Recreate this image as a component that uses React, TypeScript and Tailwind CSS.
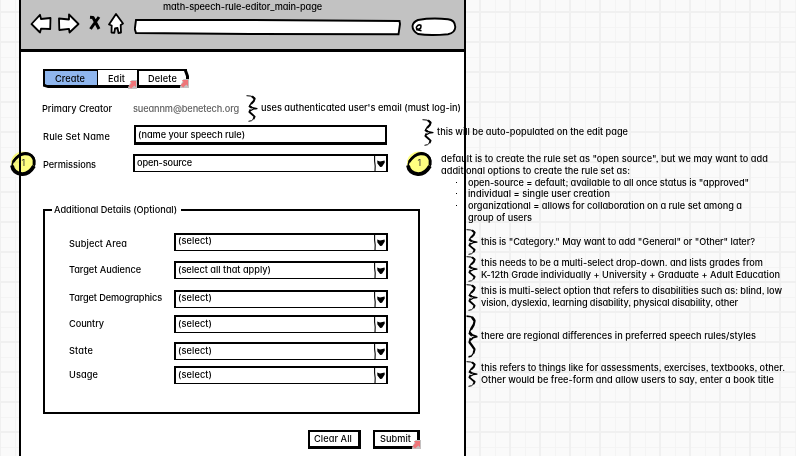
import { useLayoutEffect, useRef } from "react";

// A line of lettering whose tracking is adjusted to fill the given width.
function Line({ w, children, className = "" }: { w: number; children: string; className?: string }) {
  const ref = useRef<HTMLSpanElement>(null);
  useLayoutEffect(() => {
    const fit = () => {
      const el = ref.current;
      if (!el) return;
      el.style.letterSpacing = "0px";
      const natural = el.getBoundingClientRect().width;
      el.style.letterSpacing = `${(w - natural) / children.length}px`;
    };
    fit();
    document.fonts?.ready.then(fit);
  }, [w, children]);
  return (
    <span ref={ref} className={`block w-fit shrink-0 whitespace-pre text-[9.2px] leading-[12px] font-medium ${className}`}>
      {children}
    </span>
  );
}

function Brace({ h = 27 }: { h?: number }) {
  return (
    <svg width="12" height={h} viewBox="0 0 12 27" preserveAspectRatio="none" className="block shrink-0" fill="none" stroke="#000" strokeLinejoin="round">
      <path d="M0.5 0.7 L5 1.1 L8.6 3" strokeWidth="1" />
      <path d="M6 1.4 L8.6 3.6 L7.8 6 L5 9" strokeWidth="2.1" />
      <path d="M5 8.5 L3.6 10.6 L5.5 12.3 L11 13.6 L7 14.2 L5 15.6" strokeWidth="1.2" />
      <path d="M3 10.8 L6 12.8" strokeWidth="2.2" />
      <path d="M4.6 14.5 L3.4 17 L6 19.3 L8.6 21.6 L7.5 24" strokeWidth="1.9" />
      <path d="M8 23.5 L5.5 25.7 L2.5 26.3" strokeWidth="1" />
    </svg>
  );
}

function LinkMark() {
  return (
    <svg width="9" height="9" viewBox="0 0 9 9" className="block">
      <path d="M3.5 0H9V9H0V7.5Z" fill="#c4c0c0" />
      <path d="M1.8 1H8V7.2L6.3 5.6L3.2 8.6L.6 6.2L3.6 3Z" fill="#ee7478" />
    </svg>
  );
}

function Marker() {
  return (
    <svg width="28" height="28" viewBox="0 0 28 28" className="block">
      <ellipse cx="14" cy="13" rx="12" ry="11.5" fill="#ffff80" />
      <path d="M3 17 Q3 10 10 5 Q15 1.5 20 3.5 Q27 7 25.5 15 Q23 22 15 24.5 Q5 25 3 17" fill="none" stroke="#000" strokeWidth="1.6" />
      <path d="M3 15.5 Q4 23 13 24.2 Q20 24.5 25 16" fill="none" stroke="#000" strokeWidth="3.8" />
      <path d="M4 12 Q9 5 15 4 Q23 3 25 10 L25 15" fill="none" stroke="#000" strokeWidth="2.7" />
      <text x="12.5" y="16" fontSize="9" fontFamily="Inter" fill="#333">1</text>
    </svg>
  );
}

function Select({ w, text, tw, drop = "mt-[1px]" }: { w: string; text: string; tw: number; drop?: string }) {
  return (
    <div className={`${w} flex h-[18px] justify-between border-2 border-b-[1px] border-black bg-white`}>
      <Line w={tw} className={`ml-[2px] ${drop}`}>{text}</Line>
      <svg width="12" height="15" viewBox="0 0 12 15" className="block shrink-0">
        <path d="M.6 0L.6 5L1.2 10L1 15" stroke="#000" strokeWidth="1.1" fill="none" />
        <path d="M3.2 4.6L6 5.4L10.6 4.4L10.8 6.6L8 10.8L6.2 11L3.4 7.5Z" fill="#000" />
      </svg>
    </div>
  );
}

const DETAILS = [
  { label: "Subject Area", lw: 58, text: "(select)", tw: 34, gap: "mt-0", shift: "pt-[5px]", drop: "mt-0" },
  { label: "Target Audience", lw: 72, text: "(select all that apply)", tw: 93, gap: "mt-[10px]", shift: "pt-[3px]", drop: "mt-[1px]" },
  { label: "Target Demographics", lw: 93, text: "(select)", tw: 34, gap: "mt-[11px]", shift: "pt-[2px]", drop: "mt-0" },
  { label: "Country", lw: 35, text: "(select)", tw: 34, gap: "mt-[7px]", shift: "pt-[3px]", drop: "mt-[1px]" },
  { label: "State", lw: 24, text: "(select)", tw: 34, gap: "mt-[9px]", shift: "pt-[3px]", drop: "mt-[1px]" },
  { label: "Usage", lw: 29, text: "(select)", tw: 34, gap: "mt-[6px]", shift: "pt-[3px]", drop: "mt-[1px]" },
];

function Header() {
  return (
    <header className="h-[52px] border-b-[3px] border-black bg-[#c2c2c2]">
      <div className="flex h-[13px] pt-[1px] pl-[142px]">
        <Line w={159}>math-speech-rule-editor_main-page</Line>
      </div>
      <div className="flex pl-[9px]">
        <svg width="104" height="23" viewBox="30 13 104 23" className="block shrink-0" fill="#fff" stroke="#000" strokeWidth="1.8" strokeLinejoin="round">
          <path d="M31.5 24L40 14.8L41 19L50.5 18L50.2 29L41 28.7L40 32.5Z" />
          <path d="M59 18.5L69 19.5L69 14.5L78.5 24L69.5 32.5L69 28.8L59.3 30Z" />
          <path d="M90 17.3L93 17.5L99 29M99 17L94 24L90.5 29" fill="none" strokeWidth="3" />
          <path d="M116 14L123 23.5L120.7 25L121 32.5L118.5 33L117.5 28L115 28.5L114.3 32.8L111.5 32.5L111.7 25.5L109 24.5Z" />
        </svg>
        <svg width="324" height="23" viewBox="134 13 324 23" className="block shrink-0" fill="#fff" stroke="#000" strokeWidth="1.9">
          <path d="M136 20L250 20L399.5 21L400 24L398.5 34.3L250 34L136 33L134.8 29Z" />
          <path d="M418 20Q432 17.5 448 19.3Q455 20 455.3 27Q455 33 448 34.2Q430 36 418 34Q412.5 31 412.5 26Q413 22 418 20Z" />
          <path d="M416.5 27Q418 24 420.8 25.3Q421.6 28.7 418.5 29.3Q415.8 29 416.5 27M416 29.5L421.5 30.8" strokeWidth="1.6" />
        </svg>
      </div>
    </header>
  );
}

function Tabs() {
  return (
    <nav className="ml-[22px] flex h-[20px] w-[146px]">
      <div className="relative h-[19px] w-[55px] border-2 border-r-[1px] border-b-[3px] border-black bg-[#8fb6ee] pl-[10px]">
        <Line w={30} className="mt-[2px]">Create</Line>
        <svg width="55" height="4" viewBox="0 0 55 4" className="absolute top-[13px] left-[-2px]">
          <path d="M0 0L2 0L6 2L55 1V4H5L0 2Z" fill="#000" />
          <path d="M0 2.4L5 4H0Z" fill="#fff" />
        </svg>
      </div>
      <div className="relative h-[19px] w-[39px] border-t-[1px] border-b-[3px] border-black pl-[10px]">
        <Line w={17} className="mt-[3px]">Edit</Line>
        <div className="absolute top-[10px] left-[30px]"><LinkMark /></div>
      </div>
      <div className="relative h-[19px] w-[50px] border-2 border-r-[1px] border-b-[3px] border-black pl-[9px]">
        <Line w={29} className="mt-[2px]">Delete</Line>
        <svg width="5" height="19" viewBox="0 0 5 19" className="absolute top-[-2px] left-[45px]">
          <path d="M0 0H2.5L5 7V10H3L0 2Z" fill="#000" />
        </svg>
        <div className="absolute top-[8px] left-[41px]"><LinkMark /></div>
      </div>
    </nav>
  );
}

type Note = { x: string; w: number; text: string };
const NOTES: Note[] = [
  { x: "left-[261px] top-[102px]", w: 200, text: "uses authenticated user's email (must log-in)" },
  { x: "left-[437px] top-[126px]", w: 191, text: "this will be auto-populated on the edit page" },
  { x: "left-[441px] top-[153px]", w: 327, text: 'default is to create the rule set as "open source", but we may want to add' },
  { x: "left-[441px] top-[165px]", w: 189, text: "additional options to create the rule set as:" },
  { x: "left-[468px] top-[177px]", w: 281, text: 'open-source = default; available to all once status is "approved"' },
  { x: "left-[468px] top-[188px]", w: 142, text: "individual = single user creation" },
  { x: "left-[468px] top-[200px]", w: 274, text: "organizational = allows for collaboration on a rule set among a" },
  { x: "left-[468px] top-[212px]", w: 64, text: "group of users" },
  { x: "left-[481px] top-[236px]", w: 274, text: 'this is "Category." May want to add "General" or "Other" later?' },
  { x: "left-[481px] top-[257px]", w: 282, text: "this needs to be a multi-select drop-down. and lists grades from" },
  { x: "left-[481px] top-[269px]", w: 299, text: "K-12th Grade individually + University + Graduate + Adult Education" },
  { x: "left-[481px] top-[285px]", w: 301, text: "this is multi-select option that refers to disabilities such as: blind, low" },
  { x: "left-[481px] top-[297px]", w: 257, text: "vision, dyslexia, learning disability, physical disability, other" },
  { x: "left-[481px] top-[330px]", w: 275, text: "there are regional differences in preferred speech rules/styles" },
  { x: "left-[481px] top-[362px]", w: 304, text: "this refers to things like for assessments, exercises, textbooks, other." },
  { x: "left-[481px] top-[374px]", w: 293, text: "Other would be free-form and allow users to say, enter a book title" },
];

const BRACES = [
  { at: "left-[246px] top-[95px]", h: 27 },
  { at: "left-[422px] top-[119px]", h: 27 },
  { at: "left-[466px] top-[229px]", h: 26 },
  { at: "left-[466px] top-[256px]", h: 26 },
  { at: "left-[466px] top-[284px]", h: 27 },
  { at: "left-[466px] top-[315px]", h: 43 },
  { at: "left-[466px] top-[361px]", h: 26 },
];

const BULLETS = ["left-[456px] top-[182px]", "left-[456px] top-[193px]", "left-[456px] top-[205px]"];

export default function App() {
  return (
    <div className="relative h-[456px] w-[796px] overflow-hidden bg-[#fafafa] font-['Inter',sans-serif] text-black [font-feature-settings:'cv11','ss03']">
      {/* canvas grid */}
      <div className="absolute inset-0 bg-[linear-gradient(90deg,#f4f4f4_1px,transparent_1px),linear-gradient(#f4f4f4_1px,transparent_1px)] bg-[length:30px_30px,30px_30px] bg-[position:15px_0,0_27px]" />
      <div className="absolute inset-0 bg-[linear-gradient(90deg,#f0f0f0_2px,transparent_2px),linear-gradient(#f0f0f0_2px,transparent_2px)] bg-[length:30px_30px,30px_30px] bg-[position:-1px_0,0_11px]" />

      {/* browser window */}
      <main className="relative ml-[19px] h-[456px] w-[447px] border-x-2 border-black bg-white">
        <Header />
        <div className="flex flex-col pt-[17px]">
          <Tabs />
          <div className="mt-[14px] flex h-[12px] pl-[21px]">
            <div className="w-[91px]"><Line w={70}>Primary Creator</Line></div>
            <Line w={106} className="text-[#606060]">sueannm@benetech.org</Line>
          </div>
          <div className="mt-[10px] flex h-[20px] pl-[22px]">
            <div className="w-[91px] pt-[6px]"><Line w={67}>Rule Set Name</Line></div>
            <div className="flex h-[20px] w-[253px] border-2 border-b-[3px] border-black pt-[2px] pl-[2px]">
              <Line w={107}>(name your speech rule)</Line>
            </div>
          </div>
          <div className="mt-[9px] flex h-[18px] pl-[22px]">
            <div className="w-[90px] pt-[5px]"><Line w={53}>Permissions</Line></div>
            <Select w="w-[255px]" text="open-source" tw={55} />
          </div>
          <fieldset className="mt-[32px] ml-[22px] h-[210px] w-[377px] border-2 border-black">
            <legend className="ml-[7px] h-[12px] px-[2px]"><Line w={123} className="mr-[2px]">Additional Details (Optional)</Line></legend>
            <div className="pt-[17px]">
              {DETAILS.map((d) => (
                <div key={d.label} className={`flex h-[18px] pl-[24px] ${d.gap}`}>
                  <div className={`w-[105px] ${d.shift}`}><Line w={d.lw}>{d.label}</Line></div>
                  <Select w="w-[214px]" text={d.text} tw={d.tw} drop={d.drop} />
                </div>
              ))}
            </div>
          </fieldset>
          <div className="mt-[16px] flex gap-[12px] pl-[287px]">
            <button className="h-[19px] w-[53px] border-2 border-r-[3px] border-b-[3px] border-black bg-white pl-[4px]">
              <Line w={38}>Clear All</Line>
            </button>
            <button className="relative h-[19px] w-[47px] border-2 border-r-[3px] border-b-[3px] border-black bg-white pl-[5px]">
              <Line w={31}>Submit</Line>
              <div className="absolute top-[8px] left-[37px]"><LinkMark /></div>
            </button>
          </div>
        </div>
      </main>

      {/* reviewer notes laid over the canvas */}
      {NOTES.map((n) => (
        <div key={n.text} className={`absolute flex ${n.x}`}><Line w={n.w}>{n.text}</Line></div>
      ))}
      {BRACES.map((b) => (
        <div key={b.at} className={`absolute ${b.at}`}><Brace h={b.h} /></div>
      ))}
      {BULLETS.map((b) => (
        <div key={b} className={`absolute size-px bg-black ${b}`} />
      ))}
      <div className="absolute top-[150px] left-[9px] mix-blend-multiply"><Marker /></div>
      <div className="absolute top-[150px] left-[405px] mix-blend-multiply"><Marker /></div>
    </div>
  );
}
